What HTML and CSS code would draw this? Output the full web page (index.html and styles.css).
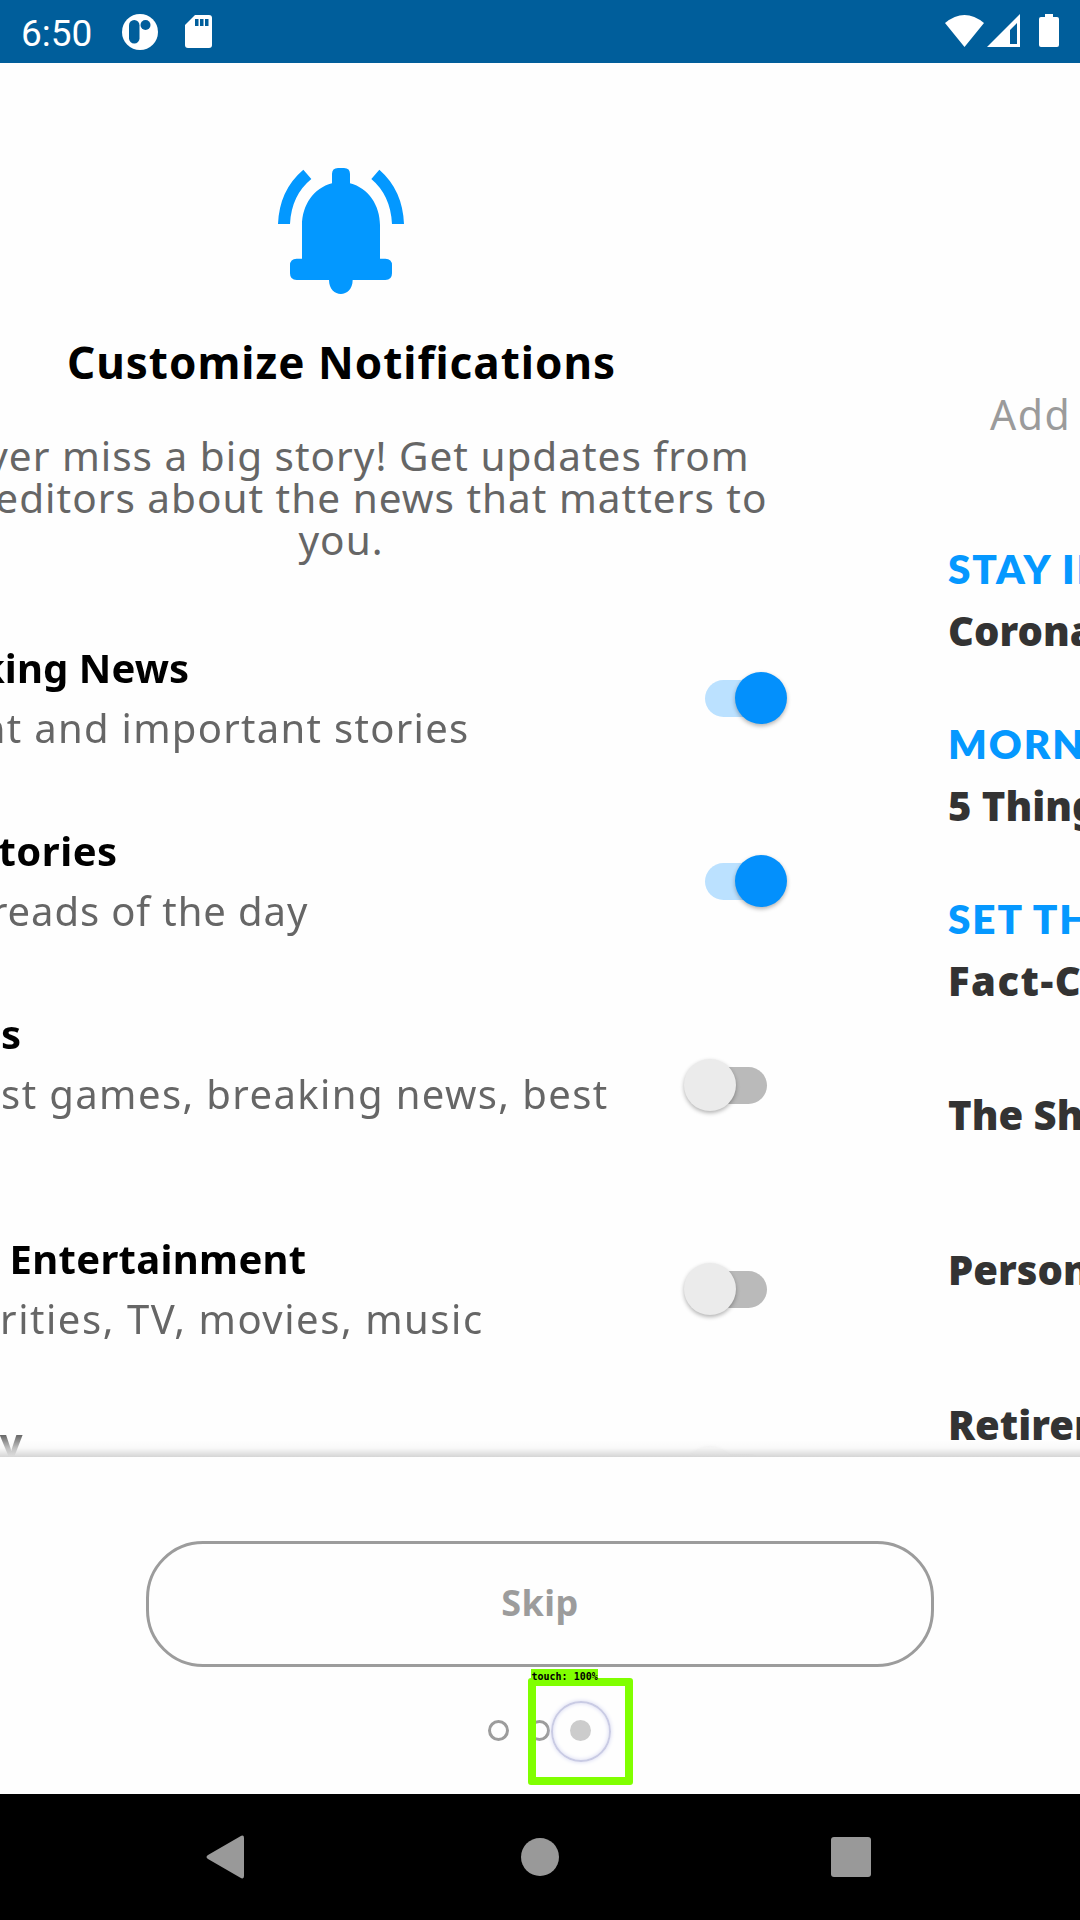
FILE: index.html
```
<!DOCTYPE html>
<html lang="en">
<head>
<meta charset="utf-8">
<title>Customize Notifications</title>
<link rel="stylesheet" href="styles.css">
</head>
<body>
<div class="screen">
  <header class="status">
    <span class="time">6:50</span>
    <svg class="app-icon" width="38" height="38" viewBox="0 0 38 38"><circle cx="19" cy="19" r="18" fill="#fff"/><rect x="8" y="7" width="10.500" height="23.500" rx="5.200" fill="#005e9b"/><circle cx="24.500" cy="12" r="5" fill="#005e9b"/></svg>
    <svg class="sd-icon" width="28" height="34" viewBox="0 0 28 34"><path d="M10 0H24Q27 0 27 3V30Q27 33 24 33H3Q0 33 0 30V10Z" fill="#fff"/><path d="M10 4h3.500v7h-3.500zM15 4h3.500v7h-3.500zM20 4h3.500v7h-3.500z" fill="#005e9b"/></svg>
    <svg class="signals" width="116" height="36" viewBox="0 0 116 36" fill="#fff"><path d="M0 9Q19.500-7 39 9L19.500 33Z"/><path d="M75 0V33H42ZM72 9L65 16V30H72Z" fill-rule="evenodd"/><path d="M100 0h8v3h4q2 0 2 2v26q0 2-2 2H96q-2 0-2-2V5q0-2 2-2h4z"/></svg>
  </header>
  <main class="pager">
    <section class="page">
      <svg class="bell" width="160" height="160" viewBox="0 0 480 480" fill="#0398ff"><path d="M216 100V72Q216 54 234 54H252Q270 54 270 72V100C325 114 360 166 360 226V326H376Q396 326 396 346V370Q396 390 376 390H278C278 446 207 446 207 390H110Q90 390 90 370V346Q90 326 110 326H126V226C126 166 161 114 216 100Z"/><path d="M130 59L154 87Q94 136 90 222H54Q58 120 130 59ZM358 59L334 87Q392 136 396 222H432Q428 120 358 59Z"/></svg>
      <h1 class="title">Customize Notifications</h1>
      <p class="intro">Never miss a big story! Get updates from<br>our editors about the news that matters to<br>you.</p>
      <div class="topics">
        <div class="topic breaking"><div class="copy"><h2>Breaking News</h2><p>Urgent and important stories</p></div><span class="toggle on"><i></i></span></div>
        <div class="topic top"><div class="copy"><h2>Top Stories</h2><p>Must-reads of the day</p></div><span class="toggle on"><i></i></span></div>
        <div class="topic tall sports"><div class="copy"><h2>Sports</h2><p>Biggest games, breaking news, best</p></div><span class="toggle"><i></i></span></div>
        <div class="topic life"><div class="copy"><h2>Life &amp; Entertainment</h2><p>Celebrities, TV, movies, music</p></div><span class="toggle"><i></i></span></div>
        <div class="topic"><div class="copy"><h2>Money</h2></div><span class="toggle"><i></i></span></div>
      </div>
    </section>
    <section class="page letters">
      <p class="add">Add</p>
      <div class="groups">
        <div><h3>STAY IN</h3><h4>Corona</h4></div>
        <div><h3>MORNIN</h3><h4>5 Things</h4></div>
        <div><h3>SET TH</h3><h4 class="wide">Fact-C</h4></div>
      </div>
      <div class="singles"><h4>The Sh</h4><h4>Person</h4><h4>Retirem</h4></div>
    </section>
    <div class="fade"></div>
  </main>
  <footer class="panel">
    <button class="skip">Skip</button>
    <div class="dots"><i></i><i></i><i class="current"></i>
      <div class="touch"><span class="ring"></span><span class="tag">touch: 100%</span></div>
    </div>
  </footer>
  <nav class="navbar">
    <svg width="38" height="44" viewBox="0 0 38 44" fill="#999"><path d="M34 1.500Q38 -1 38 3V41Q38 45 34 42.500L2 24Q-1 22 2 20Z"/></svg>
    <svg class="home" width="38" height="38" viewBox="0 0 38 38"><circle cx="19" cy="19" r="19" fill="#999"/></svg>
    <svg width="40" height="40" viewBox="0 0 40 40"><rect width="40" height="40" rx="3" fill="#999"/></svg>
  </nav>
</div>
</body>
</html>
```
FILE: styles.css
```
* { box-sizing: border-box; margin: 0; padding: 0; }
body { background: #fefefe; font-family: "Noto Sans", sans-serif; }
.screen { width: 1080px; height: 1920px; display: flex; flex-direction: column; overflow: hidden; }

.status { flex: none; height: 63px; padding-left: 21px; background: #005e9b; color: #fff; display: flex; align-items: flex-start; }
.time { font: 37px/43px Roboto, sans-serif; padding-top: 12px; width: 100px; }
.app-icon { margin-top: 13px; }
.sd-icon { margin: 15px 0 0 26px; }
.signals { margin: 14px 19px 0 auto; }

.pager { position: relative; flex: none; height: 1394px; display: flex; margin-left: -199px; width: 1279px; overflow: hidden; }
.page { flex: none; width: 1080px; }
.bell { display: block; margin: 87px 0 0 459px; }
.title { margin-top: 22px; padding-left: 1px; font-size: 44px; line-height: 60px; font-weight: 700; text-align: center; color: #000; letter-spacing: 1px; }
.intro { margin-top: 43px; font-size: 40.500px; line-height: 42px; text-align: center; color: #666; letter-spacing: 1px; white-space: nowrap; }
.topics { margin-top: 45px; padding: 0 94px 0 87px; -webkit-mask-image: linear-gradient(#000 815px, transparent 850px); mask-image: linear-gradient(#000 815px, transparent 850px); }
.topic { height: 183px; display: flex; align-items: center; justify-content: space-between; }
.topic.tall { height: 225px; }
.copy { height: 120px; }
.tall .copy { height: 162px; }
.copy h2 { font-size: 40px; line-height: 60px; font-weight: 700; color: #000; white-space: nowrap; }
.copy p { font-size: 40px; line-height: 60px; color: #666; white-space: nowrap; }
.breaking h2 { letter-spacing: .1px; }
.breaking p { letter-spacing: 1.3px; margin-left: -5px; }
.top h2 { letter-spacing: .5px; margin-left: 5px; }
.top p { letter-spacing: .9px; margin-left: -9px; }
.sports h2 { letter-spacing: .5px; margin-left: 3px; }
.sports p { letter-spacing: 1.4px; margin-left: -2px; }
.life h2 { letter-spacing: .3px; word-spacing: 6px; margin-left: -17px; }
.life p { letter-spacing: 1.55px; margin-left: -1px; }

.toggle { position: relative; flex: none; width: 104px; height: 52px; margin-top: 1px; }
.toggle::before { content: ""; position: absolute; left: 22px; right: 20px; top: 8px; height: 37px; border-radius: 19px; background: #bababa; }
.toggle i { position: absolute; left: 1px; top: 0; width: 52px; height: 52px; border-radius: 50%; background: #ebebeb; box-shadow: 0 2px 4px rgba(0,0,0,.3); }
.toggle.on::before { background: #bbe1ff; }
.toggle.on i { left: 52px; background: #0390fc; }

.letters { padding-left: 67px; white-space: nowrap; }
.add { margin: 321px 0 0 42px; font-size: 41px; line-height: 60px; color: #9b9b9b; letter-spacing: 1.6px; }
.groups { margin-top: 92px; display: flex; flex-direction: column; gap: 49px; }
.letters h3, .letters h4 { font-size: 40px; line-height: 63px; font-weight: 700; }
.letters h3 { color: #0598ff; font-family: Lato, sans-serif; font-size: 40.500px; font-weight: 800; line-height: 65px; margin-bottom: -2px; letter-spacing: 1.9px; }
.letters h4 { color: #333; font-weight: 900; }
.letters .wide { letter-spacing: 1.5px; }
.singles { margin-top: 71px; display: flex; flex-direction: column; gap: 92px; }
.fade { position: absolute; left: 0; right: 0; bottom: 0; height: 38px; background: linear-gradient(transparent 55%, rgba(0,0,0,.02) 76%, rgba(0,0,0,.16)); }

.panel { flex: none; height: 337px; display: flex; flex-direction: column; align-items: center; padding-top: 84px; background: #fefefe; }
.skip { width: 788px; height: 126px; border: 3px solid #9c9c9c; border-radius: 57px; background: none; color: #9c9c9c; font: 700 36px/40px "Noto Sans", sans-serif; letter-spacing: .5px; padding-bottom: 2px; }
.dots { position: relative; display: flex; gap: 20px; margin: 53px 2px 0 0; }
.dots i { width: 21px; height: 21px; border: 3px solid #9c9c9c; border-radius: 50%; }
.dots .current { border: 0; background: #ccc; }
.touch { position: absolute; left: 40px; top: -42px; width: 105px; height: 107px; border: 8px solid #80ff00; border-radius: 3px; }
.ring { position: absolute; left: 15px; top: 15px; width: 60px; height: 61px; border-radius: 50%; border: 2px solid #c9cbe4; box-shadow: 0 0 4px #d5d7f2, inset 0 0 4px #d5d7f2; }
.tag { position: absolute; left: -5px; top: -17px; width: 67px; height: 13px; padding-left: 1px; background: #80ff00; color: #000; font: 700 10px/15px "DejaVu Sans Mono", monospace; white-space: nowrap; }

.navbar { flex: none; height: 126px; background: #000; display: flex; align-items: center; justify-content: space-between; padding: 0 209px 0 206px; }
.home { margin-left: 5px; }
```
